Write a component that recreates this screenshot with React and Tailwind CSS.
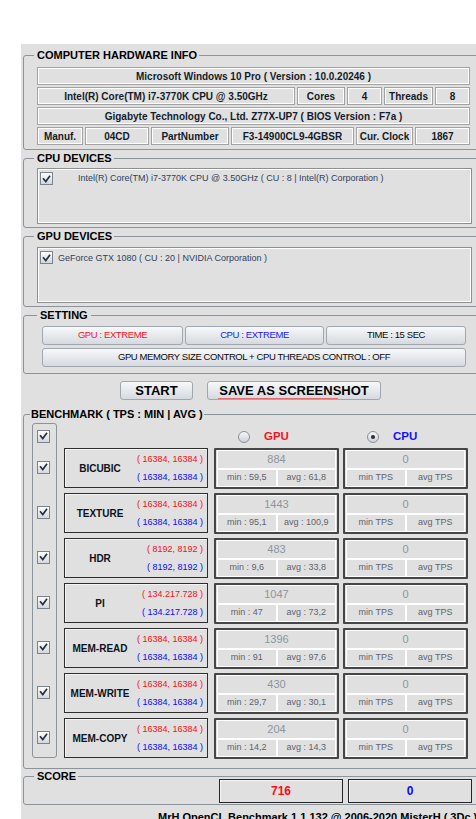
import React from 'react';

const benchRows = [
  { name: 'BICUBIC', a: '( 16384, 16384 )', b: '( 16384, 16384 )', top: '884', min: 'min : 59,5', avg: 'avg : 61,8' },
  { name: 'TEXTURE', a: '( 16384, 16384 )', b: '( 16384, 16384 )', top: '1443', min: 'min : 95,1', avg: 'avg : 100,9' },
  { name: 'HDR', a: '( 8192, 8192 )', b: '( 8192, 8192 )', top: '483', min: 'min : 9,6', avg: 'avg : 33,8' },
  { name: 'PI', a: '( 134.217.728 )', b: '( 134.217.728 )', top: '1047', min: 'min : 47', avg: 'avg : 73,2' },
  { name: 'MEM-READ', a: '( 16384, 16384 )', b: '( 16384, 16384 )', top: '1396', min: 'min : 91', avg: 'avg : 97,6' },
  { name: 'MEM-WRITE', a: '( 16384, 16384 )', b: '( 16384, 16384 )', top: '430', min: 'min : 29,7', avg: 'avg : 30,1' },
  { name: 'MEM-COPY', a: '( 16384, 16384 )', b: '( 16384, 16384 )', top: '204', min: 'min : 14,2', avg: 'avg : 14,3' },
];

function Check() {
  return (
    <span className="flex h-[13px] w-[13px] shrink-0 items-center justify-center border border-[#7b838e] bg-linear-to-b from-[#fdfdfd] to-[#d3d7dc]">
      <svg width="9" height="8" viewBox="0 0 9 8">
        <path d="M1 3.2 L3.8 6.6 L8 0.8" fill="none" stroke="#2a323d" strokeWidth="1.7" />
      </svg>
    </span>
  );
}

function Radio({ on }) {
  return (
    <span className="flex h-[12px] w-[12px] shrink-0 items-center justify-center rounded-full border border-[#8a9099] bg-linear-to-b from-[#f6f7f9] to-[#cdd1d7]">
      {on && <span className="h-[4px] w-[4px] rounded-full bg-[#2d2d2d]" />}
    </span>
  );
}

// cellule du tableau "hardware info"
function Cell({ className = '', children }) {
  return (
    <div
      className={`flex h-[18px] items-center justify-center whitespace-nowrap border border-[#a3a3a3] text-[10px] font-bold text-[#141c2a] shadow-[inset_0_0_0_1px_#ffffff] ${className}`}
    >
      {children}
    </div>
  );
}

function Btn({ className = '', children }) {
  return (
    <div
      className={`relative flex items-center justify-center whitespace-nowrap rounded-[3px] border border-[#a1a7ae] bg-linear-to-b from-[#f7f8fa] to-[#d6dadf] ${className}`}
    >
      {children}
    </div>
  );
}

function Legend({ className = '', children }) {
  return (
    <legend className={`text-[11px] font-bold leading-[12px] text-black ${className}`}>{children}</legend>
  );
}

function ResultBox({ top, min, avg }) {
  return (
    <div className="flex h-[41px] w-[125px] flex-col rounded-[1px] border-2 border-[#464646] px-[1px]">
      <div className="flex h-[19px] items-center justify-center border border-white text-[11px] text-[#8c96a0]">
        {top}
      </div>
      <div className="flex h-[18px]">
        <div className="flex flex-1 items-center justify-center whitespace-nowrap border border-white text-[9px] text-[#5f646b]">{min}</div>
        <div className="flex flex-1 items-center justify-center whitespace-nowrap border border-white text-[9px] text-[#5f646b]">{avg}</div>
      </div>
    </div>
  );
}

export default function App() {
  return (
    <div className="h-[819px] w-[476px] overflow-hidden bg-white font-['Liberation_Sans',Arial,sans-serif]">
      <div className="ml-[21px] mt-[44px] h-[775px] w-[470px] overflow-hidden bg-[#e0e0e0] px-[2px] pt-[5px]">
        {/* Computer hardware info */}
        <fieldset className="w-[460px] rounded-[3px] border border-[#8d939b] pb-[4px] pl-[13px] pt-[6px]">
          <Legend className="ml-[-3px] pl-[3px] pr-[2px]">COMPUTER HARDWARE INFO</Legend>
          <div className="flex w-[433px] flex-col gap-[2px]">
            <Cell>Microsoft Windows 10 Pro ( Version : 10.0.20246 )</Cell>
            <div className="flex gap-[2px]">
              <Cell className="w-[258px]">Intel(R) Core(TM) i7-3770K CPU @ 3.50GHz</Cell>
              <Cell className="w-[48px]">Cores</Cell>
              <Cell className="w-[35px]">4</Cell>
              <Cell className="w-[49px]">Threads</Cell>
              <Cell className="w-[35px]">8</Cell>
            </div>
            <Cell>Gigabyte Technology Co., Ltd. Z77X-UP7 ( BIOS Version : F7a )</Cell>
            <div className="flex gap-[2px]">
              <Cell className="w-[46px]">Manuf.</Cell>
              <Cell className="w-[64px]">04CD</Cell>
              <Cell className="w-[78px]">PartNumber</Cell>
              <Cell className="w-[123px]">F3-14900CL9-4GBSR</Cell>
              <Cell className="w-[57px]">Cur. Clock</Cell>
              <Cell className="w-[55px]">1867</Cell>
            </div>
          </div>
        </fieldset>

        {/* CPU devices */}
        <fieldset className="mt-[2px] w-[460px] rounded-[3px] border border-[#8d939b] pb-[3px] pl-[13px] pt-[4px]">
          <Legend className="ml-[-3px] pl-[3px] pr-[2px]">CPU DEVICES</Legend>
          <div className="h-[56px] w-[435px] border border-[#8f8f8f] pl-[2px] pt-[3px] shadow-[inset_0_0_0_1px_#ffffff]">
            <div className="flex items-center">
              <Check />
              <span className="ml-[25px] whitespace-nowrap text-[9px] text-[#2f3f5e]">
                Intel(R) Core(TM) i7-3770K CPU @ 3.50GHz ( CU : 8 | Intel(R) Corporation )
              </span>
            </div>
          </div>
        </fieldset>

        {/* GPU devices */}
        <fieldset className="mt-[2px] w-[460px] rounded-[3px] border border-[#8d939b] pb-[3px] pl-[13px] pt-[5px]">
          <Legend className="ml-[-3px] pl-[3px] pr-[2px]">GPU DEVICES</Legend>
          <div className="h-[56px] w-[435px] border border-[#8f8f8f] pl-[2px] pt-[2px] shadow-[inset_0_0_0_1px_#ffffff]">
            <div className="flex items-center">
              <Check />
              <span className="ml-[5px] mt-[2px] whitespace-nowrap text-[9px] text-[#2f3f5e]">
                GeForce GTX 1080 ( CU : 20 | NVIDIA Corporation )
              </span>
            </div>
          </div>
        </fieldset>

        {/* Setting */}
        <fieldset className="mt-[2px] w-[460px] rounded-[3px] border border-[#8d939b] pb-[6px] pl-[18px] pt-[5px]">
          <Legend className="ml-[-5px] px-[3px] text-[11.5px]">SETTING</Legend>
          <div className="flex w-[424px] flex-col gap-[3px] text-[9.5px] tracking-[-0.4px]">
            <div className="flex gap-[2px]">
              <Btn className="h-[19px] w-[141px] text-[#ff1020]">GPU : EXTREME</Btn>
              <Btn className="h-[19px] w-[139px] text-[#1a1aff]">CPU : EXTREME</Btn>
              <Btn className="h-[19px] w-[140px] text-[#0a0a0a]">TIME : 15 SEC</Btn>
            </div>
            <Btn className="h-[19px] w-[424px] text-[#0a0a0a]">
              GPU MEMORY SIZE CONTROL + CPU THREADS CONTROL : OFF
            </Btn>
          </div>
        </fieldset>

        {/* Actions */}
        <div className="mt-[7px] flex gap-[14px] pl-[97px] text-[13px] font-bold text-black">
          <Btn className="h-[19px] w-[73px]">START</Btn>
          <Btn className="h-[19px] w-[174px]">
            SAVE AS SCREENSHOT
            <span className="absolute bottom-0 left-[10px] h-px w-[120px] bg-[#e86a6a]" />
          </Btn>
        </div>

        {/* Benchmark */}
        <fieldset className="mt-[8px] w-[460px] rounded-[3px] border border-[#8d939b] pb-[10px] pl-[8px] pt-[3px]">
          <Legend className="ml-[-2px] px-[1px]">BENCHMARK ( TPS : MIN | AVG )</Legend>
          <div className="flex gap-[7px]">
            <div className="flex h-[335px] w-[25px] flex-col rounded-[3px] border border-[#8d939b] pl-[4px]">
              <div className="flex h-[24px] items-center pt-[1px]">
                <Check />
              </div>
              <div className="flex flex-col gap-[5px]">
                {benchRows.map((r) => (
                  <div key={r.name} className="flex h-[40px] items-center">
                    <Check />
                  </div>
                ))}
              </div>
            </div>

            <div className="flex flex-col">
              <div className="flex h-[25px] items-center pt-[3px] text-[11.5px] font-bold">
                <span className="ml-[174px]"><Radio /></span>
                <span className="ml-[14px] text-[#ff1020]">GPU</span>
                <span className="ml-[78px]"><Radio on /></span>
                <span className="ml-[14px] text-[#1010ff]">CPU</span>
              </div>
              <div className="flex flex-col gap-[5px]">
                {benchRows.map((r) => (
                  <div key={r.name} className="flex h-[40px]">
                    <div className="flex h-[40px] w-[144px] border border-[#2e2e2e] shadow-[inset_1px_1px_0_#f4f4f4]">
                      <div className="flex w-[70px] shrink-0 items-center justify-center whitespace-nowrap text-[10px] font-bold text-[#0d1320]">
                        {r.name}
                      </div>
                      <div className="flex flex-1 flex-col items-end gap-[5px] whitespace-nowrap pr-[4px] pt-[4px] text-[9px] leading-[13px]">
                        <span className="text-[#ff0a14]">{r.a}</span>
                        <span className="text-[#0a0aff]">{r.b}</span>
                      </div>
                    </div>
                    <div className="ml-[6px]">
                      <ResultBox top={r.top} min={r.min} avg={r.avg} />
                    </div>
                    <div className="ml-[4px]">
                      <ResultBox top="0" min="min TPS" avg="avg TPS" />
                    </div>
                  </div>
                ))}
              </div>
            </div>
          </div>
        </fieldset>

        {/* Score */}
        <fieldset className="mt-[1px] w-[460px] rounded-[3px] border border-[#8d939b] pb-[1px] pl-[13px]">
          <Legend className="ml-[-3px] pl-[3px] pr-[2px]">SCORE</Legend>
          <div className="-mt-[3px] ml-[182px] flex gap-[5px] text-[12px] font-bold">
            <div className="flex h-[24px] w-[124px] items-center justify-center border border-[#262626] text-[#ff0a14] shadow-[inset_1px_1px_0_#f4f4f4]">
              716
            </div>
            <div className="flex h-[24px] w-[124px] items-center justify-center border border-[#262626] text-[#0a0aff] shadow-[inset_1px_1px_0_#f4f4f4]">
              0
            </div>
          </div>
        </fieldset>

        <div className="mt-[6px] whitespace-nowrap pl-[135px] text-[11px] font-bold leading-[13px] text-black">
          MrH OpenCL Benchmark 1.1.132 @ 2006-2020 MisterH ( 3Dc )
        </div>
      </div>
    </div>
  );
}
